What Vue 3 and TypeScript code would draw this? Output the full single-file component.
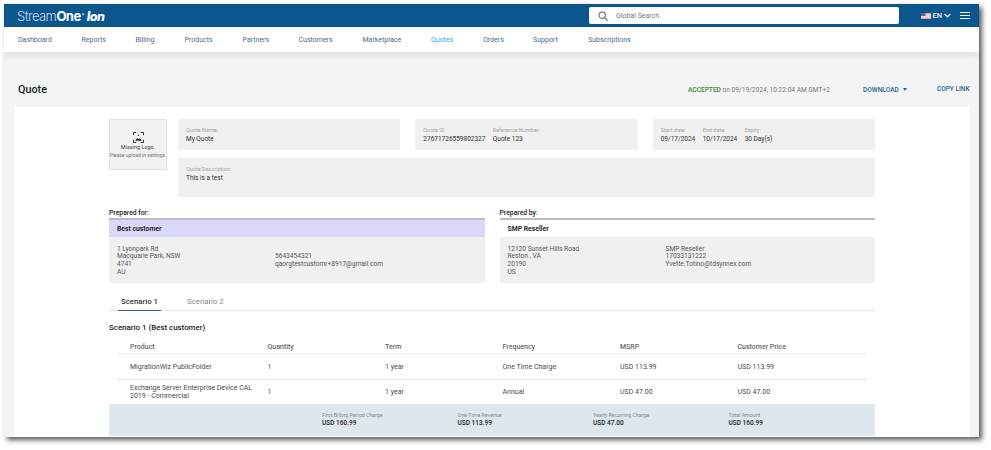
<script setup lang="ts">
const navItems: { label: string; width: number; active?: boolean }[] = [
  { label: 'Dashboard', width: 63.5 },
  { label: 'Reports', width: 54 },
  { label: 'Billing', width: 49 },
  { label: 'Products', width: 58 },
  { label: 'Partners', width: 56 },
  { label: 'Customers', width: 64 },
  { label: 'Marketplace', width: 68.5 },
  { label: 'Quotes', width: 52, active: true },
  { label: 'Orders', width: 50 },
  { label: 'Support', width: 55 },
  { label: 'Subscriptions', width: 60 },
]
const rows = [
  { product: 'MigrationWiz PublicFolder', qty: '1', term: '1 year', freq: 'One Time Charge', msrp: 'USD 113.99', price: 'USD 113.99' },
  { product: 'Exchange Server Enterprise Device CAL 2019 - Commercial', qty: '1', term: '1 year', freq: 'Annual', msrp: 'USD 47.00', price: 'USD 47.00' },
]
const totals = [
  { label: 'First Billing Period Charge', value: 'USD 160.99' },
  { label: 'One-Time Revenue', value: 'USD 113.99' },
  { label: 'Yearly Recurring Charge', value: 'USD 47.00' },
  { label: 'Total Amount', value: 'USD 160.99' },
]
</script>

<template>
  <div class="stage">
    <div class="window">
      <header class="topbar">
        <div class="logo"><span class="l-thin">Stream</span><span class="l-bold">One</span><sup class="l-reg">®</sup><span class="l-ion">Ion</span></div>
        <div class="search">
          <svg width="10" height="10" viewBox="0 0 12 12" fill="none" stroke="#666" stroke-width="1.3"><circle cx="5" cy="5" r="3.8" /><path d="M8 8l3.4 3.4" /></svg>
          <span>Global Search</span>
        </div>
        <div class="lang">
          <svg class="flag" width="10" height="6" viewBox="0 0 10 6"><rect width="10" height="6" fill="#e8a0a8" /><rect y="1.5" width="10" height="1" fill="#fff" /><rect y="3.5" width="10" height="1" fill="#fff" /><rect width="4.5" height="3" fill="#5a6a9a" /></svg>
          <span>EN</span>
          <svg width="7" height="5" viewBox="0 0 7 5" fill="none" stroke="#e6eef5" stroke-width="1.2"><path d="M.6 1l2.9 2.8L6.4 1" /></svg>
        </div>
        <div class="burger"><i></i><i></i><i></i></div>
      </header>

      <nav class="nav">
        <a v-for="n in navItems" :key="n.label" :class="{ active: n.active }" :style="{ width: n.width + 'px' }">{{ n.label }}</a>
      </nav>

      <main class="page">
        <div class="titlebar">
          <h1>Quote</h1>
          <div class="status"><b>ACCEPTED</b> on 09/19/2024, 10:22:04 AM GMT+2</div>
          <div class="download">DOWNLOAD <i class="caret"></i></div>
          <div class="copy">COPY LINK</div>
        </div>

        <section class="card">
          <div class="head">
            <div class="logobox">
              <svg width="11" height="11" viewBox="0 0 12 12" fill="none" stroke="#222" stroke-width="1"><path d="M.5 3.5v-3h3M8.500 .5h3v3M11.500 8.500v3h-3M3.500 11.500h-3v-3" /><path d="M2.500 9.500l2-3 1.500 1.500 1.500-1.500 2 3z" fill="#222" stroke="none" /><circle cx="6" cy="3.500" r=".8" fill="#222" stroke="none" /></svg>
              <div class="missing">Missing Logo.</div>
              <div class="upload">Please upload in settings.</div>
            </div>
            <div class="infos">
              <div class="inforow">
                <div class="info">
                  <div class="field"><label>Quote Name:</label><p>My Quote</p></div>
                </div>
                <div class="info">
                  <div class="field w-id"><label>Quote ID:</label><p>27671726559802327</p></div>
                  <div class="field"><label>Reference Number:</label><p>Quote 123</p></div>
                </div>
                <div class="info">
                  <div class="field w-date"><label>Start date:</label><p>09/17/2024</p></div>
                  <div class="field w-date"><label>End date:</label><p>10/17/2024</p></div>
                  <div class="field"><label>Expiry:</label><p>30 Day(s)</p></div>
                </div>
              </div>
              <div class="info desc">
                <div class="field"><label>Quote Description:</label><p>This is a test</p></div>
              </div>
            </div>
          </div>

          <div class="parties">
            <div class="party">
              <div class="ptitle">Prepared for:</div>
              <div class="pname lilac">Best customer</div>
              <div class="pbody">
                <div class="pcol">1 Lyonpark Rd<br />Macquarie Park, NSW<br />4741<br />AU</div>
                <div class="pcol"><br />5643454321<br />qaorgtestcustomr+8917@gmail.com</div>
              </div>
            </div>
            <div class="party">
              <div class="ptitle">Prepared by:</div>
              <div class="pname">SMP Reseller</div>
              <div class="pbody">
                <div class="pcol">12120 Sunset Hills Road<br />Reston , VA<br />20190<br />US</div>
                <div class="pcol">SMP Reseller<br />17033131222<br />Yvette.Totino@tdsynnex.com</div>
              </div>
            </div>
          </div>

          <div class="tabs">
            <span class="tab on">Scenario 1</span>
            <span class="tab">Scenario 2</span>
          </div>

          <h2>Scenario 1 (Best customer)</h2>

          <table>
            <thead>
              <tr><th>Product</th><th>Quantity</th><th>Term</th><th>Frequency</th><th>MSRP</th><th>Customer Price</th></tr>
            </thead>
            <tbody>
              <tr v-for="r in rows" :key="r.product">
                <td>{{ r.product }}</td><td class="qty">{{ r.qty }}</td><td>{{ r.term }}</td><td>{{ r.freq }}</td><td>{{ r.msrp }}</td><td>{{ r.price }}</td>
              </tr>
            </tbody>
          </table>

          <div class="summary">
            <div v-for="t in totals" :key="t.label" class="sum">
              <label>{{ t.label }}</label>
              <b>{{ t.value }}</b>
            </div>
          </div>
        </section>
      </main>
    </div>
  </div>
</template>

<style>
html, body { margin: 0; background: #fff; }
</style>

<style scoped>
* { box-sizing: border-box; }
.stage {
  width: 991px; height: 450px; padding: 4px 0 0 4px; overflow: hidden;
  font-family: Roboto, "Liberation Sans", sans-serif; color: #333;
}
.window {
  width: 975px; height: 433px; display: flex; flex-direction: column; overflow: hidden;
  background: #f3f4f6; box-shadow: 3px 3px 5px rgba(0, 0, 0, .65);
}
.topbar { height: 23px; flex: none; background: #0b578d; display: flex; align-items: center; color: #fff; }
.logo { width: 585px; padding-left: 13px; font-family: Inter, "Liberation Sans", sans-serif; font-size: 13px; letter-spacing: -.55px; display: flex; align-items: baseline; }
.l-thin { font-weight: 300; color: #c8d9e8; }
.l-bold { font-weight: 700; }
.l-reg { font-size: 4px; align-self: flex-start; margin: 4px 1px 0 1px; }
.l-ion { font-weight: 800; font-style: italic; margin-left: 2px; font-size: 12.500px; }
.search {
  width: 310px; height: 17px; background: #fff; border-radius: 2px; padding-left: 9px;
  display: flex; align-items: center; gap: 8px; font-size: 7px; color: #777;
}
.lang { margin-left: 22px; display: flex; align-items: center; gap: 1.500px; font-size: 7.500px; font-weight: 500; color: #e6eef5; width: 30px; }
.burger { margin-left: 9px; width: 10px; display: flex; flex-direction: column; gap: 1.500px; }
.burger i { display: block; height: 1.500px; background: #f0f5fa; }
.nav {
  height: 25px; flex: none; background: #fff; display: flex; align-items: center; padding: 1px 0 0 14px;
  font-size: 7px; color: #4a6a88; position: relative; box-shadow: 0 2px 8px rgba(0, 0, 0, .12);
}
.nav a.active { color: #2fa8e6; }
.page { flex: 1; min-height: 0; padding: 0 9px 0 10px; }
.titlebar { height: 55px; display: flex; align-items: center; padding: 20px 0 0 4px; }
h1 { margin: 0; font-size: 10.800px; font-weight: 500; color: #1b1b1b; width: 670px; }
.status { font-size: 6.600px; color: #777; width: 175px; }
.status b { color: #3c8a3c; font-weight: 500; }
.download { font-size: 6.600px; font-weight: 500; color: #2d5f8f; width: 74px; display: flex; align-items: center; gap: 4px; }
.caret { width: 0; height: 0; border: 2.500px solid transparent; border-top: 3px solid #2d5f8f; border-bottom: 0; }
.copy { font-size: 6.500px; font-weight: 500; color: #2d5f8f; margin-top: -1px; }
.card { background: #fff; padding: 12px 95px 0; height: 340px; }
.head { display: flex; gap: 11px; }
.logobox {
  width: 58px; height: 51px; flex: none; background: #f1f1f1; border: 1px solid #e2e2e2;
  display: flex; flex-direction: column; align-items: center; padding-top: 11.500px; color: #444;
}
.missing { font-size: 5.500px; line-height: 7px; margin-top: 1px; }
.upload { font-size: 5px; line-height: 6px; margin-top: 1px; white-space: nowrap; color: #777; }
.infos { flex: 1; display: flex; flex-direction: column; gap: 8px; }
.inforow { display: flex; gap: 15px; }
.info { flex: 1; height: 31px; background: #f0f0f0; padding: 8px 8px 0; display: flex; }
.desc { flex: none; height: 39px; }
.field label { display: block; font-size: 5.500px; color: #a5a5a5; line-height: 7px; }
.field p { margin: 1px 0 0; font-size: 6.500px; line-height: 9px; color: #333; white-space: nowrap; }
.w-id { width: 69.500px; }
.w-date { width: 42px; }
.parties { display: flex; gap: 15px; margin-top: 11px; }
.party { flex: 1; }
.ptitle { font-size: 6.800px; font-weight: 500; color: #222; line-height: 11px; border-bottom: 2px solid #bcbcbc; height: 12px; }
.pname { height: 17px; padding: 1px 0 0 8px; font-size: 6.800px; font-weight: 700; color: #2a2a2a; line-height: 16px; }
.lilac { background: #d9d8fa; }
.pbody { height: 46px; background: #f0f0f0; padding: 8.500px 8px 0; display: flex; font-size: 6.600px; line-height: 7.700px; color: #555; }
.pcol { width: 158px; white-space: nowrap; }
.tabs { margin-top: 11px; height: 17px; border-bottom: 1px solid #e6e6e6; display: flex; padding-left: 9px; gap: 23px; font-size: 7.800px; color: #888; }
.tab { display: block; height: 17px; line-height: 15px; padding: 0 3px; }
.tab.on { color: #333; font-weight: 500; border-bottom: 1px solid #2d6aa0; }
h2 { margin: 12px 0 0; font-size: 7.900px; font-weight: 500; line-height: 10px; color: #222; }
table { width: 750px; margin: 7px 0 0 8px; border-collapse: collapse; table-layout: fixed; font-size: 7px; color: #444; }
th { height: 13px; font-weight: 500; text-align: left; color: #666; border-bottom: 1.500px solid #e9e9e9; padding: 2px 0 0 13px; width: 117.500px; }
th:first-child { width: 137.500px; }
th:last-child { width: 142.500px; }
td { height: 26px; padding: 3px 0 0 13px; line-height: 8.500px; border-bottom: 1px solid #e6e6e6; color: #4a4a4a; }
tbody tr:last-child td { border-bottom: 0; height: 25px; padding-top: 1px; }
.qty { color: #2d5f8f; }
.summary { height: 32px; background: #dde7f0; display: flex; padding: 8px 0 0 213px; }
.sum { width: 135.500px; }
.sum label { display: block; font-size: 5.300px; color: #888; line-height: 7px; }
.sum b { display: block; font-size: 6.500px; font-weight: 500; color: #222; line-height: 8px; }
</style>
